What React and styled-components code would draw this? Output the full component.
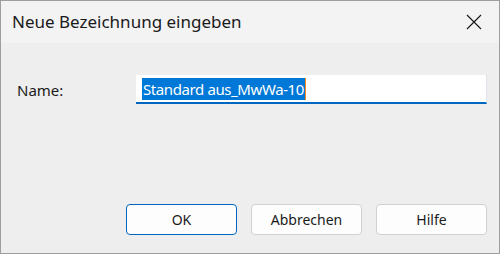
import React from 'react';
import styled, { createGlobalStyle } from 'styled-components';

const GlobalStyle = createGlobalStyle`
  html, body {
    margin: 0;
    padding: 0;
    background: #ffffff;
  }
  * {
    box-sizing: border-box;
  }
`;

const Window = styled.div`
  width: 500px;
  height: 254px;
  display: flex;
  flex-direction: column;
  border: 1px solid #9e9e9e;
  font-family: "Noto Sans", "Open Sans", sans-serif;
  color: #1a1a1a;
  overflow: hidden;
`;

const TitleBar = styled.div`
  height: 42px;
  flex-shrink: 0;
  display: flex;
  align-items: center;
  justify-content: space-between;
  padding: 0 17px 0 11px;
  background: #f3f3f3;
`;

const Title = styled.span`
  font-size: 17px;
  margin-top: -1px;
`;

const CloseButton = styled.button`
  width: 16px;
  height: 16px;
  padding: 0;
  border: none;
  background: none;
  display: flex;
  cursor: pointer;
`;

const Body = styled.div`
  flex: 1;
  display: flex;
  flex-direction: column;
  background: #eeeeee;
  padding: 32px 12px 18px 16px;
`;

const FieldRow = styled.div`
  display: flex;
  align-items: center;
`;

const Label = styled.label`
  width: 119px;
  font-size: 15px;
  padding-top: 1px;
`;

const TextBox = styled.div`
  width: 351px;
  height: 29px;
  display: flex;
  align-items: center;
  padding-left: 6px;
  background: #ffffff;
  border-right: 1px solid #dfe4ea;
  border-bottom: 2px solid #0067c0;
  font-size: 15px;
  letter-spacing: -0.4px;
`;

const Selection = styled.span`
  display: inline-flex;
  align-items: center;
  height: 22px;
  padding: 0 1px;
  margin-top: 1px;
  background: #0078d7;
  color: #ffffff;
  white-space: pre;
  border-right: 1px solid #ff8a1f;
`;

const Footer = styled.div`
  margin-top: auto;
  display: flex;
  justify-content: flex-end;
  gap: 14px;
`;

const Button = styled.button`
  width: 111px;
  height: 31px;
  border-radius: 4px;
  border: 1px solid ${p => (p.$primary ? '#0067c0' : '#d1d1d1')};
  background: #fdfdfd;
  font-family: "Noto Sans", "Open Sans", sans-serif;
  font-size: 14px;
  color: #1a1a1a;
  padding: 0;
  cursor: pointer;
`;

const CloseIcon = () => (
  <svg width="16" height="16" viewBox="0 0 16 16">
    <path d="M1 1 L15 15 M15 1 L1 15" stroke="#1a1a1a" strokeWidth="1.2" fill="none" />
  </svg>
);

export default function App() {
  return (
    <>
      <GlobalStyle />
      <Window>
        <TitleBar>
          <Title>Neue Bezeichnung eingeben</Title>
          <CloseButton aria-label="Schließen">
            <CloseIcon />
          </CloseButton>
        </TitleBar>
        <Body>
          <FieldRow>
            <Label>Name:</Label>
            <TextBox>
              <Selection>Standard aus_MwWa-10</Selection>
            </TextBox>
          </FieldRow>
          <Footer>
            <Button $primary>OK</Button>
            <Button>Abbrechen</Button>
            <Button>Hilfe</Button>
          </Footer>
        </Body>
      </Window>
    </>
  );
}
